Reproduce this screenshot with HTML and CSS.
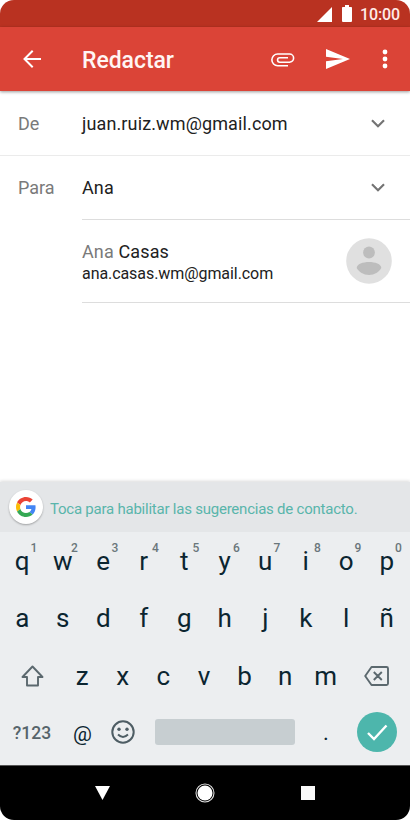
FILE: index.html
```html
<!DOCTYPE html>
<html lang="es">
<head>
<meta charset="utf-8">
<title>Redactar</title>
<link rel="stylesheet" href="styles.css">
</head>
<body>
<div class="phone">
  <div class="status">
    <svg class="signal" width="15" height="15" viewBox="0 0 15 15"><path d="M15 0V15H0Z" fill="#fff"/></svg>
    <svg class="battery" width="10" height="17" viewBox="0 0 10 17"><path d="M3 0h4v2h2.200q.8 0 .8.8v13.200q0 1-1 1H1q-1 0-1-1V2.800Q0 2 .8 2H3Z" fill="#fff"/></svg>
    <span class="clock">10:00</span>
  </div>
  <header class="appbar">
    <svg class="back" width="18" height="18" viewBox="0 0 18 18" fill="none" stroke="#fff" stroke-width="2"><path d="M18 9H1.500M9.700.8 1.500 9l8.200 8.200"/></svg>
    <h1 class="title">Redactar</h1>
    <svg class="clip" width="24" height="14" viewBox="0 0 24 14" fill="none" stroke="#fff" stroke-width="1.600"><path d="M17 12.700H6.700a5.850 5.850 0 0 1 0-11.700H18.500a4.100 4.100 0 0 1 0 8.200H8.800a2.200 2.200 0 0 1 0-4.500H17"/></svg>
    <svg class="send" width="24" height="20" viewBox="0 0 24 20"><path d="M0 0 24 10 0 20V12.300L17 10 0 7.700Z" fill="#fff"/></svg>
    <svg class="more" width="6" height="20" viewBox="0 0 6 20" fill="#fff"><circle cx="3" cy="3" r="2.400"/><circle cx="3" cy="10" r="2.400"/><circle cx="3" cy="17" r="2.400"/></svg>
  </header>
  <main class="compose">
    <div class="field from">
      <span class="label">De</span><span class="value">juan.ruiz.wm@gmail.com</span>
      <svg class="chevron" width="14" height="9" viewBox="0 0 14 9"><path d="M1 1.200 7 7.200 13 1.200" fill="none" stroke="#757575" stroke-width="2.200"/></svg>
    </div>
    <div class="field to">
      <span class="label">Para</span><span class="value ana">Ana</span>
      <svg class="chevron" width="14" height="9" viewBox="0 0 14 9"><path d="M1 1.200 7 7.200 13 1.200" fill="none" stroke="#757575" stroke-width="2.200"/></svg>
    </div>
    <div class="contact">
      <div class="who">
        <div class="name"><span class="match">Ana</span> Casas</div>
        <div class="mail">ana.casas.wm@gmail.com</div>
      </div>
      <svg class="avatar" width="46" height="46" viewBox="0 0 46 46"><circle cx="23" cy="23" r="22.800" fill="#e0e0e0"/><g fill="#bdbdbd"><circle cx="23" cy="14.500" r="5.900"/><path d="M10.700 30C10.700 26 17 24 23 24s12.300 2 12.300 6C33 34 28.500 37 23 37s-10-3-12.300-7Z"/></g></svg>
    </div>
  </main>
  <section class="keyboard">
    <div class="suggest">
      <div class="glogo">
        <svg width="20" height="20" viewBox="0 0 48 48"><path fill="#ea4335" d="M24 9.500c3.540 0 6.710 1.220 9.210 3.600l6.850-6.850C35.900 2.380 30.470 0 24 0 14.620 0 6.510 5.380 2.560 13.220l7.980 6.190C12.430 13.720 17.740 9.500 24 9.500Z"/><path fill="#4285f4" d="M46.980 24.550c0-1.570-.15-3.090-.38-4.550H24v9.020h12.940c-.58 2.960-2.260 5.480-4.780 7.180l7.730 6c4.510-4.180 7.090-10.360 7.090-17.650Z"/><path fill="#fbbc05" d="M10.530 28.590A14.500 14.500 0 0 1 9.770 24c0-1.600.28-3.140.76-4.590l-7.980-6.190A23.900 23.900 0 0 0 0 24c0 3.880.92 7.540 2.560 10.780l7.970-6.190Z"/><path fill="#34a853" d="M24 48c6.480 0 11.930-2.130 15.890-5.810l-7.730-6c-2.150 1.450-4.920 2.300-8.160 2.300-6.260 0-11.570-4.220-13.470-9.910l-7.980 6.190C6.510 42.620 14.620 48 24 48Z"/></svg>
      </div>
      <span class="hint">Toca para habilitar las sugerencias de contacto.</span>
    </div>
    <div class="keys">
      <div class="row">
        <span class="key">q<sup>1</sup></span><span class="key">w<sup>2</sup></span><span class="key">e<sup>3</sup></span><span class="key">r<sup>4</sup></span><span class="key">t<sup>5</sup></span><span class="key">y<sup>6</sup></span><span class="key">u<sup>7</sup></span><span class="key">i<sup>8</sup></span><span class="key">o<sup>9</sup></span><span class="key">p<sup>0</sup></span>
      </div>
      <div class="row">
        <span class="key">a</span><span class="key">s</span><span class="key">d</span><span class="key">f</span><span class="key">g</span><span class="key">h</span><span class="key">j</span><span class="key">k</span><span class="key">l</span><span class="key">ñ</span>
      </div>
      <div class="row letters">
        <span class="key wide"><svg width="23" height="22" viewBox="0 0 23 22"><path d="M11.500 1.500 21.500 12H17v8.500H6V12H1.500Z" fill="none" stroke="#5b686e" stroke-width="1.900" stroke-linejoin="round"/></svg></span><span class="key">z</span><span class="key">x</span><span class="key">c</span><span class="key">v</span><span class="key">b</span><span class="key">n</span><span class="key">m</span><span class="key wide"><svg width="25" height="20" viewBox="0 0 25 20" fill="none" stroke="#5b686e" stroke-width="1.900" stroke-linejoin="round"><path d="M7.500 1H22.500Q24 1 24 2.500V17.500Q24 19 22.500 19H7.500L1.200 10ZM9.800 6l8 8M17.800 6l-8 8"/></svg></span>
      </div>
      <div class="row bottom">
        <span class="sym">?123</span><span class="at">@</span>
        <svg class="smile" width="24" height="24" viewBox="0 0 24 24" fill="none" stroke="#4e5d64" stroke-width="2"><circle cx="12" cy="12" r="10.700"/><path d="M7 14.500q5 4.800 10 0" stroke-width="1.900"/><g fill="#4e5d64" stroke="none"><circle cx="8" cy="9.300" r="1.700"/><circle cx="16" cy="9.300" r="1.700"/></g></svg>
        <span class="space"></span><span class="dot">.</span>
        <svg class="done" width="40" height="40" viewBox="0 0 40 40"><circle cx="20" cy="20" r="20" fill="#4db6ac"/><path d="M11 21l6 6L29.500 13.500" fill="none" stroke="#fff" stroke-width="2.400"/></svg>
      </div>
    </div>
  </section>
  <nav class="nav">
    <svg width="15" height="14" viewBox="0 0 15 14"><path d="M0 0H15L7.500 14Z" fill="#fff"/></svg>
    <svg width="20" height="20" viewBox="0 0 20 20"><circle cx="10" cy="10" r="9" fill="none" stroke="#ddd" stroke-width="1.100"/><circle cx="10" cy="10" r="7.500" fill="#fff"/></svg>
    <svg width="14" height="14" viewBox="0 0 14 14"><path d="M0 0H14V14H0Z" fill="#fafafa"/></svg>
  </nav>
</div>
</body>
</html>
```
FILE: styles.css
```css
* { box-sizing: border-box; }
body { margin: 0; background: #fff; font-family: Roboto, sans-serif; }
svg { display: block; flex: none; }
.phone { width: 410px; height: 820px; display: flex; flex-direction: column; border-radius: 14px; overflow: hidden; background: #fff; color: #212121; }
.status { height: 27px; flex: none; background: #b93221; display: flex; align-items: center; padding: 0 10px 0 317px; color: #fff; }
.signal { margin-top: 2px; }
.battery { margin-left: 10px; }
.clock { margin: 2px 0 0 8px; font-size: 16px; line-height: 20px; font-weight: 500; letter-spacing: -.15px; color: #ffeae7; }
.appbar { height: 64px; flex: none; background: #db4437; display: flex; align-items: center; padding-left: 23px; box-shadow: 0 1px 3px rgba(0,0,0,.4); z-index: 1; }
.title { margin: 4px 0 0 41px; width: 189px; font-size: 23px; line-height: 30px; font-weight: 500; letter-spacing: -.05px; color: #fff5f4; }
.clip + .send { margin-left: 31px; }
.more { margin-left: 32px; }
.clip { margin-top: 1px; }
.compose { flex: none; height: 391px; }
.field { display: flex; align-items: center; padding: 0 25px 0 18px; font-size: 18px; line-height: 24px; }
.from { height: 65px; border-bottom: 1px solid #ebebeb; padding-top: 1px; }
.to { height: 63px; }
.label { width: 64px; color: #7a7a7a; }
.value { flex: 1; letter-spacing: .13px; }
.contact { margin-left: 82px; height: 84px; border-top: 1px solid #ddd; border-bottom: 1px solid #ddd; display: flex; align-items: center; padding-right: 18px; }
.who { flex: 1; padding-top: 2px; }
.name { font-size: 18px; line-height: 23px; letter-spacing: .13px; }
.mail { font-size: 16px; line-height: 22px; letter-spacing: -.07px; }
.match { color: #7a7a7a; }
.keyboard { height: 283px; flex: none; background: #eceef0; box-shadow: 0 -1px 3px rgba(0,0,0,.15); }
.suggest { height: 50px; background: #e4e6e8; display: flex; align-items: center; padding-left: 9px; }
.glogo { width: 34px; height: 34px; border-radius: 50%; background: #fff; display: flex; align-items: center; justify-content: center; box-shadow: 0 1px 2px rgba(0,0,0,.3); }
.hint { margin: 3px 0 0 7px; font-size: 15px; line-height: 20px; letter-spacing: -.23px; color: #59b5ab; white-space: nowrap; }
.keys { padding: 0 3px 0 2px; }
.row { height: 57.500px; display: flex; align-items: center; color: #0b2530; font-size: 26px; line-height: 30px; }
.key { flex: 1 1 0; display: flex; justify-content: center; position: relative; }
.key sup { position: absolute; left: 32px; top: -5px; width: 0; display: flex; justify-content: center; font-size: 12px; line-height: 14px; font-weight: 500; color: #6a767b; }
.wide { flex: 1.500 1 0; }
.letters .wide:first-child { margin-right: -1px; }
.letters .wide svg { margin-top: 1px; }
.sym { width: 60px; text-align: center; font-size: 17.500px; font-weight: 500; color: #56646b; }
.at { width: 41px; text-align: center; font-size: 21px; padding-top: 2px; }
.smile { margin-left: 8px; }
.space { margin-left: 20px; width: 140px; height: 26px; border-radius: 3px; background: #c7ced1; }
.dot { width: 62px; text-align: center; font-size: 22px; }
.bottom svg, .space { margin-bottom: 2px; }
.nav { height: 55px; flex: none; background: #000; border-top: 1px solid #555; display: flex; align-items: center; justify-content: space-between; padding: 0 95.500px 0 95px; }
```
